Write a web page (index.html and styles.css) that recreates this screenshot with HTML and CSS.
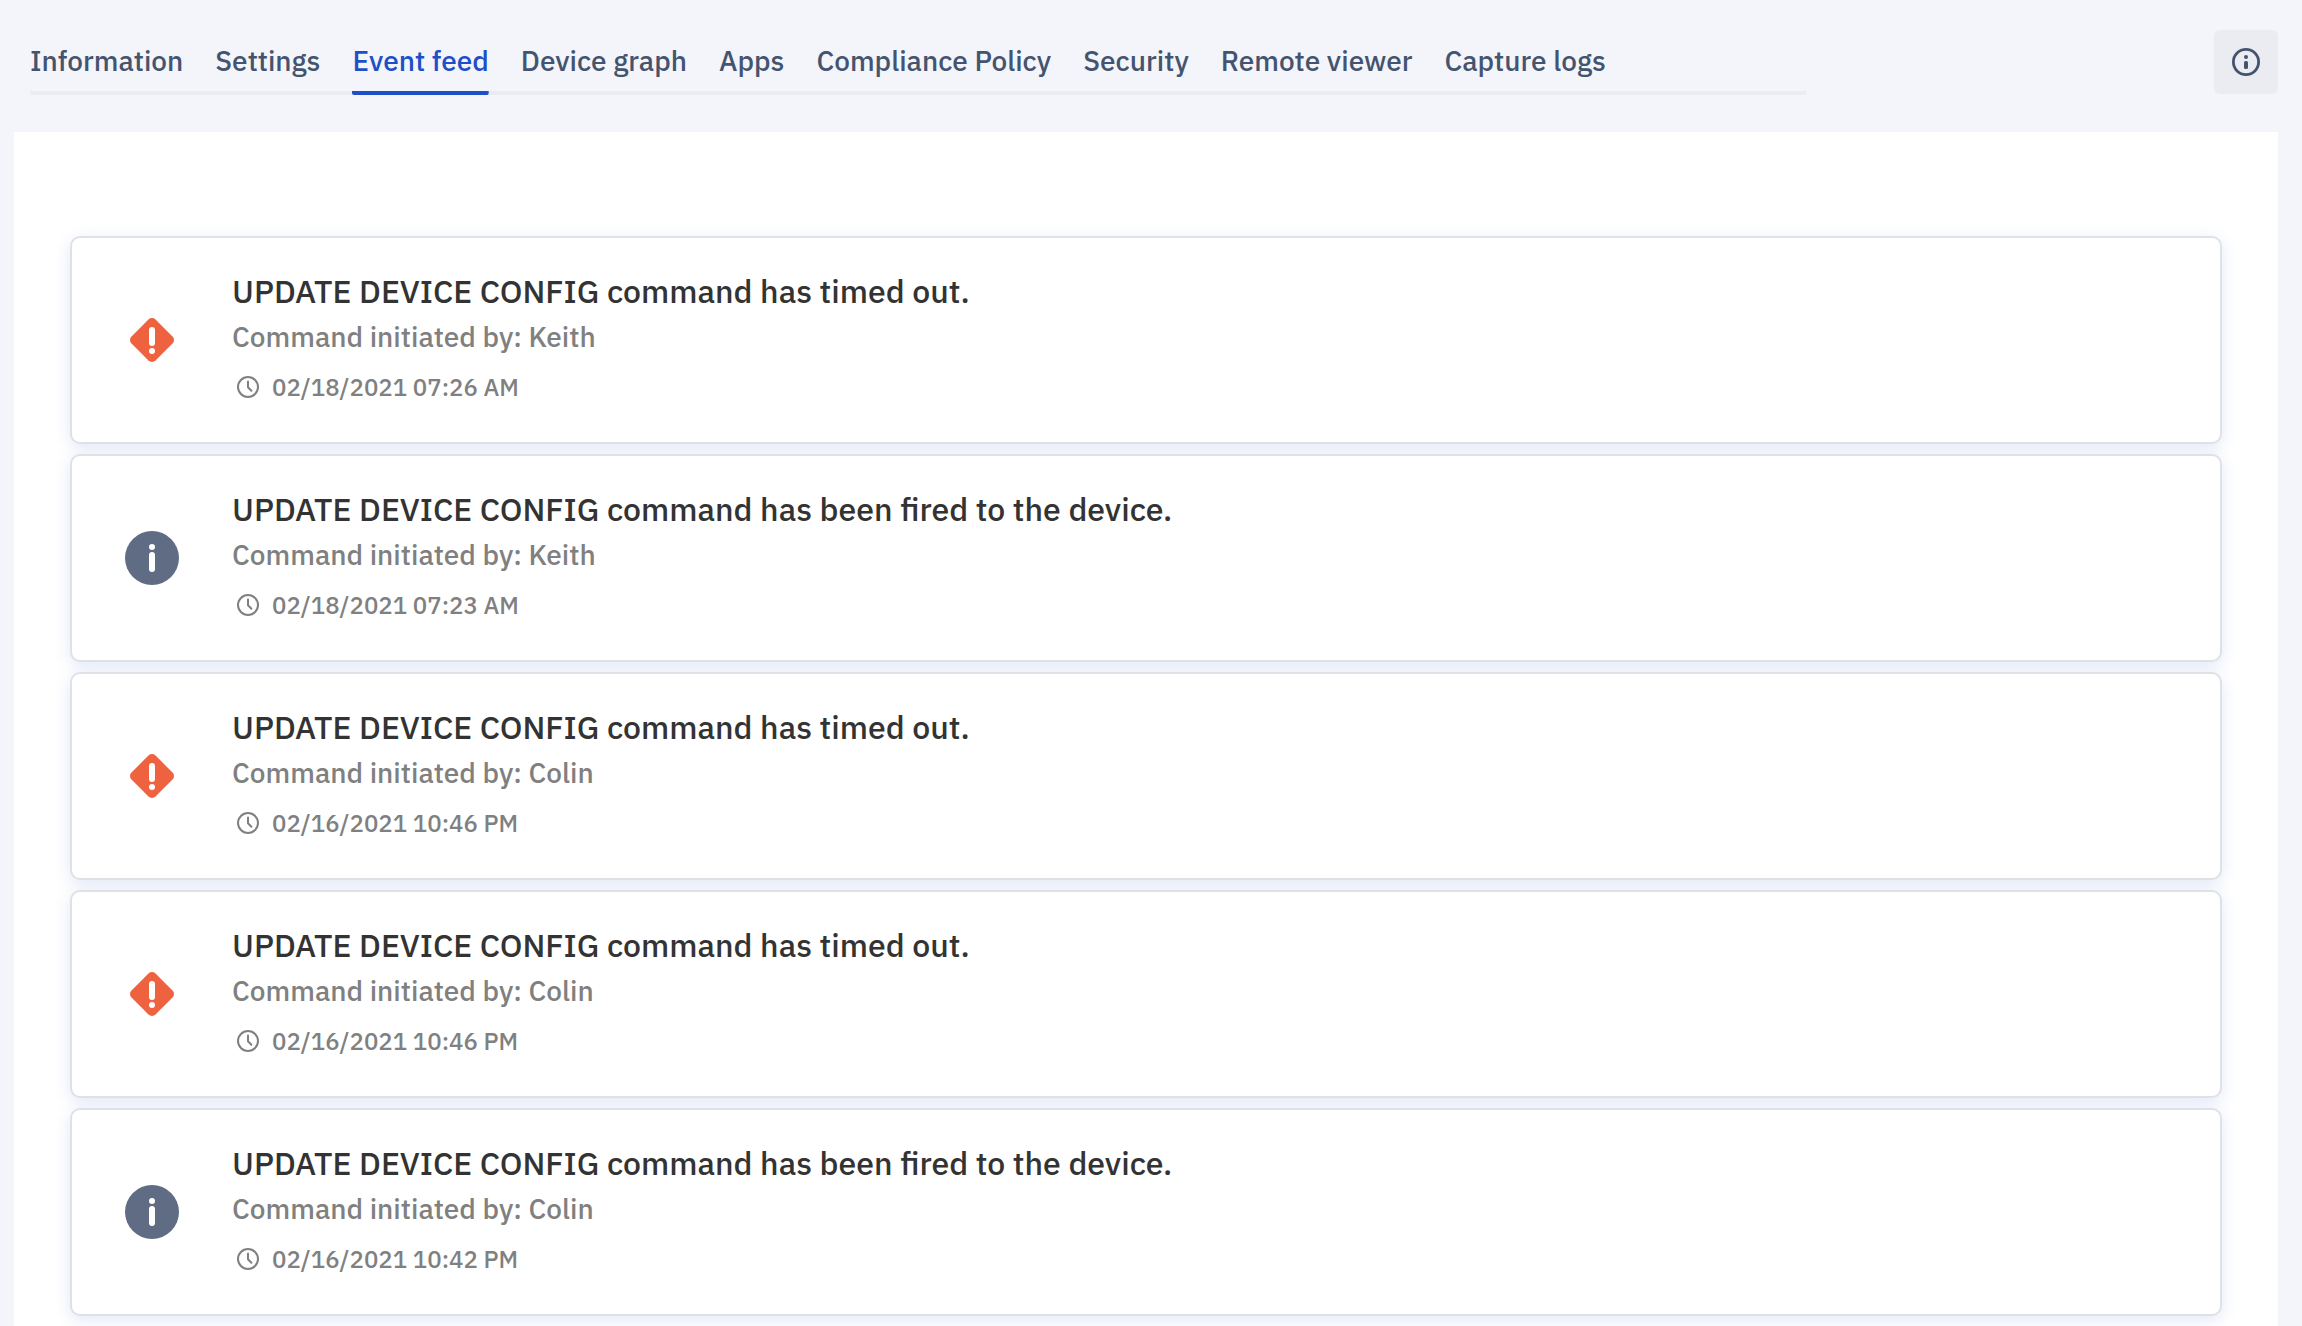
FILE: index.html
```
<!DOCTYPE html>
<html lang="en">
<head>
<meta charset="utf-8">
<meta name="viewport" content="width=device-width, initial-scale=1">
<title>Event feed</title>
<link rel="stylesheet" href="styles.css">
</head>
<body>
<svg class="sprite" aria-hidden="true">
  <symbol id="icon-error" viewBox="0 0 44 44">
    <rect x="5" y="5" width="34" height="34" rx="5" transform="rotate(45 22 22)" fill="#ee6240"/>
    <rect x="19" y="9" width="6" height="19" rx="3" fill="#fff"/>
    <circle cx="22" cy="33" r="3" fill="#fff"/>
  </symbol>
  <symbol id="icon-info" viewBox="0 0 54 54">
    <circle cx="27" cy="27" r="27" fill="#5f6c84"/>
    <circle cx="27" cy="16" r="3" fill="#fff"/>
    <rect x="24" y="21" width="6" height="20" rx="3" fill="#fff"/>
  </symbol>
  <symbol id="icon-clock" viewBox="0 0 22 22">
    <circle cx="11" cy="11" r="10" fill="none" stroke="#808080" stroke-width="2"/>
    <path d="M11 5.5v5.8l3.4 3.4" fill="none" stroke="#808080" stroke-width="2" stroke-linecap="round" stroke-linejoin="round"/>
  </symbol>
</svg>

<header class="topbar">
  <nav class="tabs" aria-label="Device sections">
    <a class="tab" href="#information">Information</a>
    <a class="tab" href="#settings">Settings</a>
    <a class="tab tab-active" href="#event-feed" aria-current="page">Event feed</a>
    <a class="tab" href="#device-graph">Device graph</a>
    <a class="tab" href="#apps">Apps</a>
    <a class="tab" href="#compliance-policy">Compliance Policy</a>
    <a class="tab" href="#security">Security</a>
    <a class="tab" href="#remote-viewer">Remote viewer</a>
    <a class="tab" href="#capture-logs">Capture logs</a>
  </nav>
  <button class="info-button" type="button" aria-label="Device details">
    <svg width="28" height="28" viewBox="0 0 28 28" aria-hidden="true">
      <circle cx="14" cy="14" r="12.6" fill="none" stroke="#44546f" stroke-width="2.8"/>
      <circle cx="14" cy="9" r="2" fill="#44546f"/>
      <rect x="12" y="13" width="4" height="8" rx="1.6" fill="#44546f"/>
    </svg>
  </button>
</header>

<main class="panel">
  <ul class="feed">
    <li class="event">
      <span class="event-icon"><svg width="44" height="44" role="img" aria-label="Error"><use href="#icon-error"/></svg></span>
      <div class="event-body">
        <h2 class="event-title">UPDATE DEVICE CONFIG command has timed out.</h2>
        <p class="event-author">Command initiated by: Keith</p>
        <p class="event-time"><svg width="22" height="22" aria-hidden="true"><use href="#icon-clock"/></svg><time datetime="2021-02-18T07:26">02/18/2021 07:26 AM</time></p>
      </div>
    </li>
    <li class="event">
      <span class="event-icon"><svg width="54" height="54" role="img" aria-label="Info"><use href="#icon-info"/></svg></span>
      <div class="event-body">
        <h2 class="event-title">UPDATE DEVICE CONFIG command has been fired to the device.</h2>
        <p class="event-author">Command initiated by: Keith</p>
        <p class="event-time"><svg width="22" height="22" aria-hidden="true"><use href="#icon-clock"/></svg><time datetime="2021-02-18T07:23">02/18/2021 07:23 AM</time></p>
      </div>
    </li>
    <li class="event">
      <span class="event-icon"><svg width="44" height="44" role="img" aria-label="Error"><use href="#icon-error"/></svg></span>
      <div class="event-body">
        <h2 class="event-title">UPDATE DEVICE CONFIG command has timed out.</h2>
        <p class="event-author">Command initiated by: Colin</p>
        <p class="event-time"><svg width="22" height="22" aria-hidden="true"><use href="#icon-clock"/></svg><time datetime="2021-02-16T22:46">02/16/2021 10:46 PM</time></p>
      </div>
    </li>
    <li class="event">
      <span class="event-icon"><svg width="44" height="44" role="img" aria-label="Error"><use href="#icon-error"/></svg></span>
      <div class="event-body">
        <h2 class="event-title">UPDATE DEVICE CONFIG command has timed out.</h2>
        <p class="event-author">Command initiated by: Colin</p>
        <p class="event-time"><svg width="22" height="22" aria-hidden="true"><use href="#icon-clock"/></svg><time datetime="2021-02-16T22:46">02/16/2021 10:46 PM</time></p>
      </div>
    </li>
    <li class="event">
      <span class="event-icon"><svg width="54" height="54" role="img" aria-label="Info"><use href="#icon-info"/></svg></span>
      <div class="event-body">
        <h2 class="event-title">UPDATE DEVICE CONFIG command has been fired to the device.</h2>
        <p class="event-author">Command initiated by: Colin</p>
        <p class="event-time"><svg width="22" height="22" aria-hidden="true"><use href="#icon-clock"/></svg><time datetime="2021-02-16T22:42">02/16/2021 10:42 PM</time></p>
      </div>
    </li>
  </ul>
</main>
</body>
</html>
```
FILE: styles.css
```
* {
  box-sizing: border-box;
}

body {
  margin: 0;
  background: #f4f5fb;
  color: #333;
  font-family: "IBM Plex Sans", Roboto, "Liberation Sans", sans-serif;
  font-weight: 500;
}

.sprite {
  display: none;
}

.topbar {
  display: flex;
  justify-content: space-between;
  align-items: flex-start;
  padding: 30px 24px 37px 30px;
}

.tabs {
  display: flex;
  gap: 32px;
  width: 79%;
  border-radius: 2px;
  box-shadow: inset 0 -4px #ebecf0;
}

.tab {
  padding: 11px 0 10px;
  border-bottom: 4px solid transparent;
  border-radius: 2px;
  color: #44546f;
  font-size: 28px;
  line-height: 40px;
  text-decoration: none;
  white-space: nowrap;
}

.tab-active {
  background: linear-gradient(#1d50c8, #1d50c8) bottom / 100% 4px no-repeat border-box;
  color: #1d50c8;
}

.info-button {
  display: grid;
  place-items: center;
  width: 64px;
  height: 64px;
  padding: 0;
  border: 0;
  border-radius: 6px;
  background: #ebecf1;
}

.panel {
  margin: 0 24px 0 14px;
  padding: 104px 56px 10px;
  background: #fff;
}

.feed {
  display: grid;
  gap: 10px;
  margin: 0;
  padding: 0;
  list-style: none;
}

.event {
  display: grid;
  grid-template-columns: 160px 1fr;
  align-items: center;
  border: 2px solid #dee2e6;
  border-radius: 10px;
  background: #fff;
  box-shadow: 0 4px 16px rgba(60, 100, 210, 0.15);
}

.event-icon {
  display: grid;
  place-items: center;
}

.event-body {
  min-width: 0;
  padding: 31px 24px 39px 0;
}

.event-title,
.event-author,
.event-time {
  margin: 0;
  font-weight: 500;
}

.event-title {
  font-size: 32px;
  line-height: 44px;
}

.event-author {
  color: #808080;
  font-size: 28px;
  line-height: 48px;
}

.event-time {
  display: flex;
  align-items: center;
  gap: 13px;
  margin-top: 10px;
  padding-left: 5px;
  color: #808080;
  font-size: 24px;
  line-height: 32px;
}
```
